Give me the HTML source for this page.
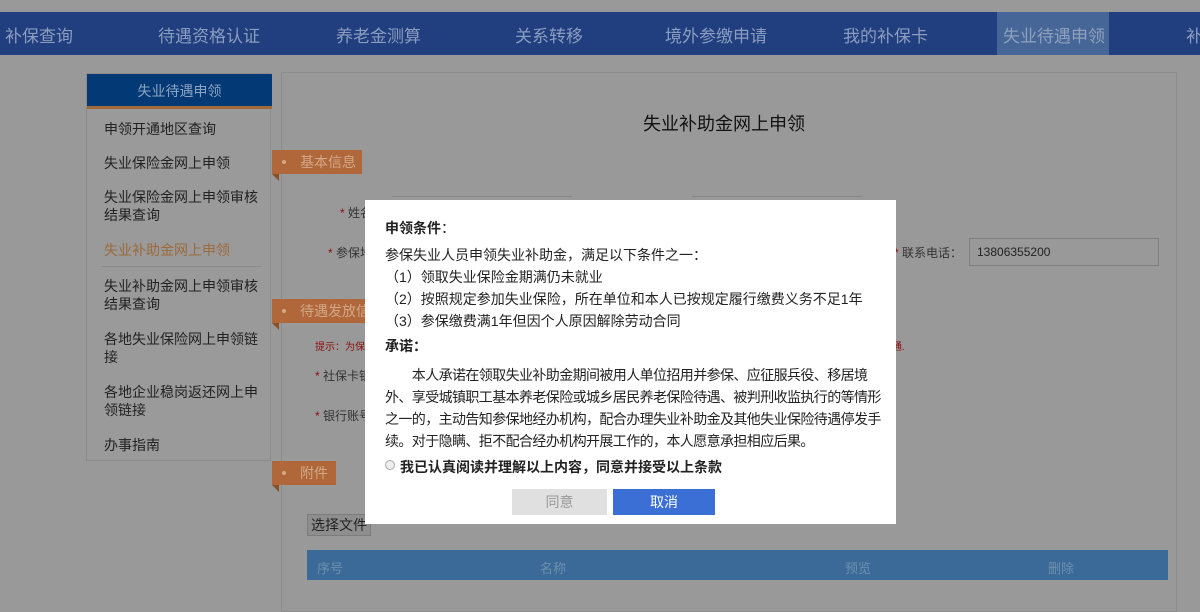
<!DOCTYPE html>
<html><head><meta charset="utf-8"><style>
*{margin:0;padding:0;box-sizing:border-box}
body{width:1200px;height:597px;overflow:hidden;background:#999;font-family:"Liberation Sans","Noto Sans CJK SC",sans-serif;position:relative;color:#222}
.a{position:absolute;white-space:nowrap}
.nav{position:absolute;left:0;top:12px;width:1200px;height:43px;background:#213f7e}
.nav span{position:absolute;top:10px;font-size:17px;color:#8a9cc0}
.side{position:absolute;left:86px;top:73px;width:185px;height:388px;background:#9a9a9a;border:1px solid #8c8c8c}
.sh{position:absolute;left:0;top:0;width:185px;height:35px;background:#033a76;border-bottom:3px solid #a26a3a;color:#8ea2c2;font-size:14px;text-align:center;line-height:34px}
.si{position:absolute;left:17px;font-size:14px;color:#222;line-height:18px}
.panel{position:absolute;left:281px;top:72px;width:896px;height:540px;background:#999;border:1px solid #8c8c8c}
.tag{position:absolute;left:272px;height:24px;background:#b0683a;color:#d2a88a;font-size:14px;line-height:24px;padding-left:28px}
.tag:before{content:"";position:absolute;left:10px;top:10px;width:4px;height:4px;border-radius:2px;background:#d2a88a}
.tag:after{content:"";position:absolute;left:0;top:24px;border-top:7px solid #8a5028;border-left:7px solid transparent}
.lbl{position:absolute;font-size:12px;color:#333}
.lbl b{color:#8a1010;font-weight:normal}
.modal{position:absolute;left:365px;top:200px;width:531px;height:324px;background:#fff}
.m{position:absolute;left:20px;font-size:14px;color:#222;white-space:nowrap}
</style></head><body>
<div class="nav">
<span style="left:5px">补保查询</span>
<span style="left:158px">待遇资格认证</span>
<span style="left:336px">养老金测算</span>
<span style="left:515px">关系转移</span>
<span style="left:665px">境外参缴申请</span>
<span style="left:843px">我的补保卡</span>
<div style="position:absolute;left:997px;top:0;width:112px;height:43px;background:#466697"></div>
<span style="left:1003px;color:#8fa0be">失业待遇申领</span>
<span style="left:1186px">补</span>
</div>
<div class="side">
<div class="sh">失业待遇申领</div>
<div class="si" style="top:46px">申领开通地区查询</div>
<div class="si" style="top:80px">失业保险金网上申领</div>
<div class="si" style="top:114px">失业保险金网上申领审核<br>结果查询</div>
<div class="si" style="top:167px;color:#9c6a3c">失业补助金网上申领</div>
<div style="position:absolute;left:14px;top:192px;width:160px;height:1px;background:#8a8a8a"></div>
<div class="si" style="top:203px">失业补助金网上申领审核<br>结果查询</div>
<div class="si" style="top:256px">各地失业保险网上申领链<br>接</div>
<div class="si" style="top:309px">各地企业稳岗返还网上申<br>领链接</div>
<div class="si" style="top:362px">办事指南</div>
</div>
<div class="panel"></div>
<div class="a" style="left:643px;top:110px;font-size:18px;color:#111">失业补助金网上申领</div>
<div class="tag" style="top:150px;width:90px">基本信息</div>
<div class="tag" style="top:299px;width:100px">待遇发放信</div>
<div class="tag" style="top:461px;width:64px">附件</div>
<div class="lbl" style="left:340px;top:204px"><b>*</b> 姓名</div>
<div class="lbl" style="left:328px;top:244px"><b>*</b> 参保地</div>
<div style="position:absolute;left:392px;top:196px;width:180px;height:6px;border-top:1px solid #888"></div>
<div style="position:absolute;left:692px;top:196px;width:170px;height:6px;border-top:1px solid #888"></div>
<div class="lbl" style="left:894px;top:244px"><b>*</b> 联系电话：</div>
<div style="position:absolute;left:969px;top:238px;width:190px;height:28px;border:1px solid #808080"></div>
<div class="lbl" style="left:977px;top:245px;color:#222">13806355200</div>
<div class="lbl" style="left:315px;top:338px;color:#8a1010;font-size:10px">提示：为保</div>
<div class="lbl" style="left:892px;top:338px;color:#8a1010;font-size:10px">通.</div>
<div class="lbl" style="left:315px;top:367px"><b>*</b> 社保卡银</div>
<div class="lbl" style="left:315px;top:407px"><b>*</b> 银行账号</div>
<div style="position:absolute;left:307px;top:514px;width:64px;height:22px;background:#8e8e8e;border:1px solid #7c7c7c;font-size:14px;line-height:20px;padding-left:3px;color:#222">选择文件</div>
<div style="position:absolute;left:307px;top:550px;width:861px;height:30px;background:#3c6a98"></div>
<div class="lbl" style="left:317px;top:558px;color:#6e8fae;font-size:13px">序号</div>
<div class="lbl" style="left:540px;top:558px;color:#6e8fae;font-size:13px">名称</div>
<div class="lbl" style="left:845px;top:558px;color:#6e8fae;font-size:13px">预览</div>
<div class="lbl" style="left:1048px;top:558px;color:#6e8fae;font-size:13px">删除</div>
<div class="modal">
<div class="m" style="top:18px;font-weight:bold">申领条件<span style="font-weight:normal">：</span></div>
<div class="m" style="top:45px">参保失业人员申领失业补助金，满足以下条件之一：</div>
<div class="m" style="top:67px">（1）领取失业保险金期满仍未就业</div>
<div class="m" style="top:89px">（2）按照规定参加失业保险，所在单位和本人已按规定履行缴费义务不足1年</div>
<div class="m" style="top:111px">（3）参保缴费满1年但因个人原因解除劳动合同</div>
<div class="m" style="top:136px;font-weight:bold">承诺：</div>
<div class="m" style="top:164px;white-space:normal;width:500px;line-height:22px;letter-spacing:-0.6px">&emsp;&emsp;本人承诺在领取失业补助金期间被用人单位招用并参保、应征服兵役、移居境外、享受城镇职工基本养老保险或城乡居民养老保险待遇、被判刑收监执行的等情形之一的，主动告知参保地经办机构，配合办理失业补助金及其他失业保险待遇停发手续。对于隐瞒、拒不配合经办机构开展工作的，本人愿意承担相应后果。</div>
<div style="position:absolute;left:20px;top:260px;width:10px;height:10px;border:1px solid #aaa;border-radius:50%;background:#eee"></div>
<div class="m" style="left:35px;top:257px;font-weight:bold">我已认真阅读并理解以上内容，同意并接受以上条款</div>
<div style="position:absolute;left:147px;top:289px;width:95px;height:26px;background:#e0e0e0;color:#999;font-size:14px;text-align:center;line-height:26px">同意</div>
<div style="position:absolute;left:248px;top:289px;width:102px;height:26px;background:#3b6fd6;color:#fff;font-size:14px;text-align:center;line-height:26px">取消</div>
</div>
</body></html>
